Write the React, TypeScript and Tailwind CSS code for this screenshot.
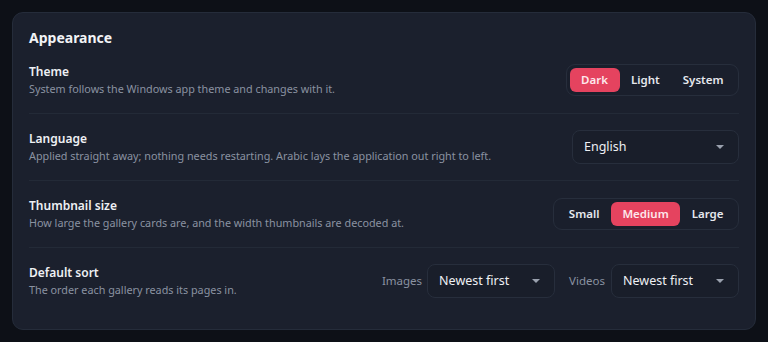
import React from 'react'

const font = { fontFamily: '"Noto Sans", "Segoe UI", Roboto, sans-serif' }

type SegProps = { options: string[]; active: string }

const Segmented: React.FC<SegProps> = ({ options, active }) => (
  <div className="flex items-center rounded-[9px] border border-[#272e3c] bg-[#1a1f2c] p-[3px]">
    {options.map((o) => (
      <button
        key={o}
        className={`h-6 rounded-[6px] px-[11.5px] text-[11.5px] font-semibold leading-none ${
          o === active ? 'bg-[#e5435f] text-[#fde8ec]' : 'text-[#e6e8ee]'
        }`}
      >
        {o}
      </button>
    ))}
  </div>
)

const Caret = () => (
  <svg width="10" height="6" viewBox="0 0 10 6" className="shrink-0">
    <path d="M1 1h8L5 5z" fill="#9aa1ae" />
  </svg>
)

const Select: React.FC<{ value: string; width: string }> = ({ value, width }) => (
  <div
    className={`flex h-[34px] ${width} items-center justify-between rounded-[8px] border border-[#272e3c] bg-[#191e2a] pl-[11px] pr-[13px] text-[12.5px] text-[#eef0f4]`}
  >
    <span>{value}</span>
    <Caret />
  </div>
)

const Row: React.FC<{ title: string; desc: string; last?: boolean; children: React.ReactNode }> = ({
  title,
  desc,
  last,
  children,
}) => (
  <div className={`flex items-center justify-between py-4 ${last ? '' : 'border-b border-[#232a37]'}`}>
    <div className="flex flex-col">
      <span className="text-[12px] font-semibold leading-[18px] text-[#eef0f4]">{title}</span>
      <span className="text-[10.8px] leading-[16px] text-[#8a92a1]">{desc}</span>
    </div>
    {children}
  </div>
)

export default function App() {
  return (
    <div className="h-[342px] w-[768px] bg-[#0d1017] p-3" style={font}>
      <div className="rounded-[11px] border border-[#252c3a] bg-[#1b202d] px-4 pt-4 pb-[15px]">
        <h2 className="text-[14px] font-bold leading-[18px] text-[#f2f3f6]">Appearance</h2>
        <Row title="Theme" desc="System follows the Windows app theme and changes with it.">
          <Segmented options={['Dark', 'Light', 'System']} active="Dark" />
        </Row>
        <Row
          title="Language"
          desc="Applied straight away; nothing needs restarting. Arabic lays the application out right to left."
        >
          <Select value="English" width="w-[167px]" />
        </Row>
        <Row title="Thumbnail size" desc="How large the gallery cards are, and the width thumbnails are decoded at.">
          <Segmented options={['Small', 'Medium', 'Large']} active="Medium" />
        </Row>
        <Row title="Default sort" desc="The order each gallery reads its pages in." last>
          <div className="flex items-center">
            <span className="mr-[5px] text-[11.5px] text-[#8a92a1]">Images</span>
            <Select value="Newest first" width="w-[128px]" />
            <span className="ml-[14px] mr-[6px] text-[11.5px] text-[#8a92a1]">Videos</span>
            <Select value="Newest first" width="w-[128px]" />
          </div>
        </Row>
      </div>
    </div>
  )
}
